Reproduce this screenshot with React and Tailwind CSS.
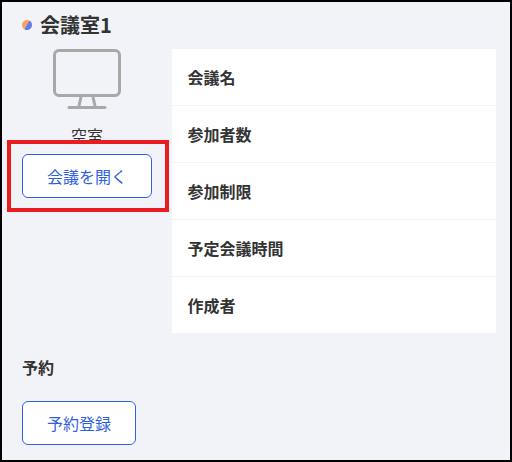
const rows = ['会議名', '参加者数', '参加制限', '予定会議時間', '作成者'];

const StatusDot = () => (
  <svg width="10" height="10" viewBox="0 0 10 10">
    <circle cx="5" cy="5" r="5" fill="#fb9e6c" />
    <path d="M7.5 0.67A5 5 0 0 1 2.5 9.33Z" fill="#5b7fee" />
  </svg>
);

const Monitor = () => (
  <svg
    width="68"
    height="60"
    viewBox="0 0 68 60"
    fill="none"
    stroke="#a8a8a8"
    strokeWidth="3"
    strokeLinecap="round"
  >
    <rect x="1.5" y="1.5" width="65" height="45" rx="4.5" />
    <path d="M28 48L26 57M40 48L42 57" strokeLinecap="butt" />
    <path d="M16 58.5H52" />
  </svg>
);

const OutlineButton = ({ children }) => (
  <button className="h-11 rounded-md border border-[#2f62e6] bg-white px-6 text-base leading-6 text-[#2f5fe0]">
    {children}
  </button>
);

const App = () => {
  return (
    <div className="h-[462px] w-[512px] overflow-hidden border-2 border-black bg-[#f2f3f8] pl-5 pr-3.5 font-['Noto_Sans_CJK_JP',sans-serif] text-[#333333]">
      <h1 className="mb-0.5 flex h-[45px] items-center gap-2 text-xl font-bold">
        <StatusDot />
        会議室1
      </h1>

      <div className="flex gap-5">
        <div className="relative flex w-[130px] flex-col items-center">
          <Monitor />
          <p className="mt-3.5 h-[31px] text-base leading-6">空室</p>
          <div className="flex w-full flex-col">
            <OutlineButton>会議を開く</OutlineButton>
          </div>
          {/* highlight frame over the button */}
          <div className="absolute -left-[15px] top-[91px] h-[72px] w-[162px] border-4 border-[#e91c1f]" />
        </div>

        <ul className="flex-1 divide-y divide-[#f2f3f8] bg-white text-base font-bold">
          {rows.map((label) => (
            <li key={label} className="box-content flex h-14 items-center pl-[15.5px] pr-4">
              {label}
            </li>
          ))}
        </ul>
      </div>

      <h2 className="mt-[22px] text-base font-bold leading-6">予約</h2>
      <div className="mt-[22px]">
        <OutlineButton>予約登録</OutlineButton>
      </div>
    </div>
  );
};

export default App;
